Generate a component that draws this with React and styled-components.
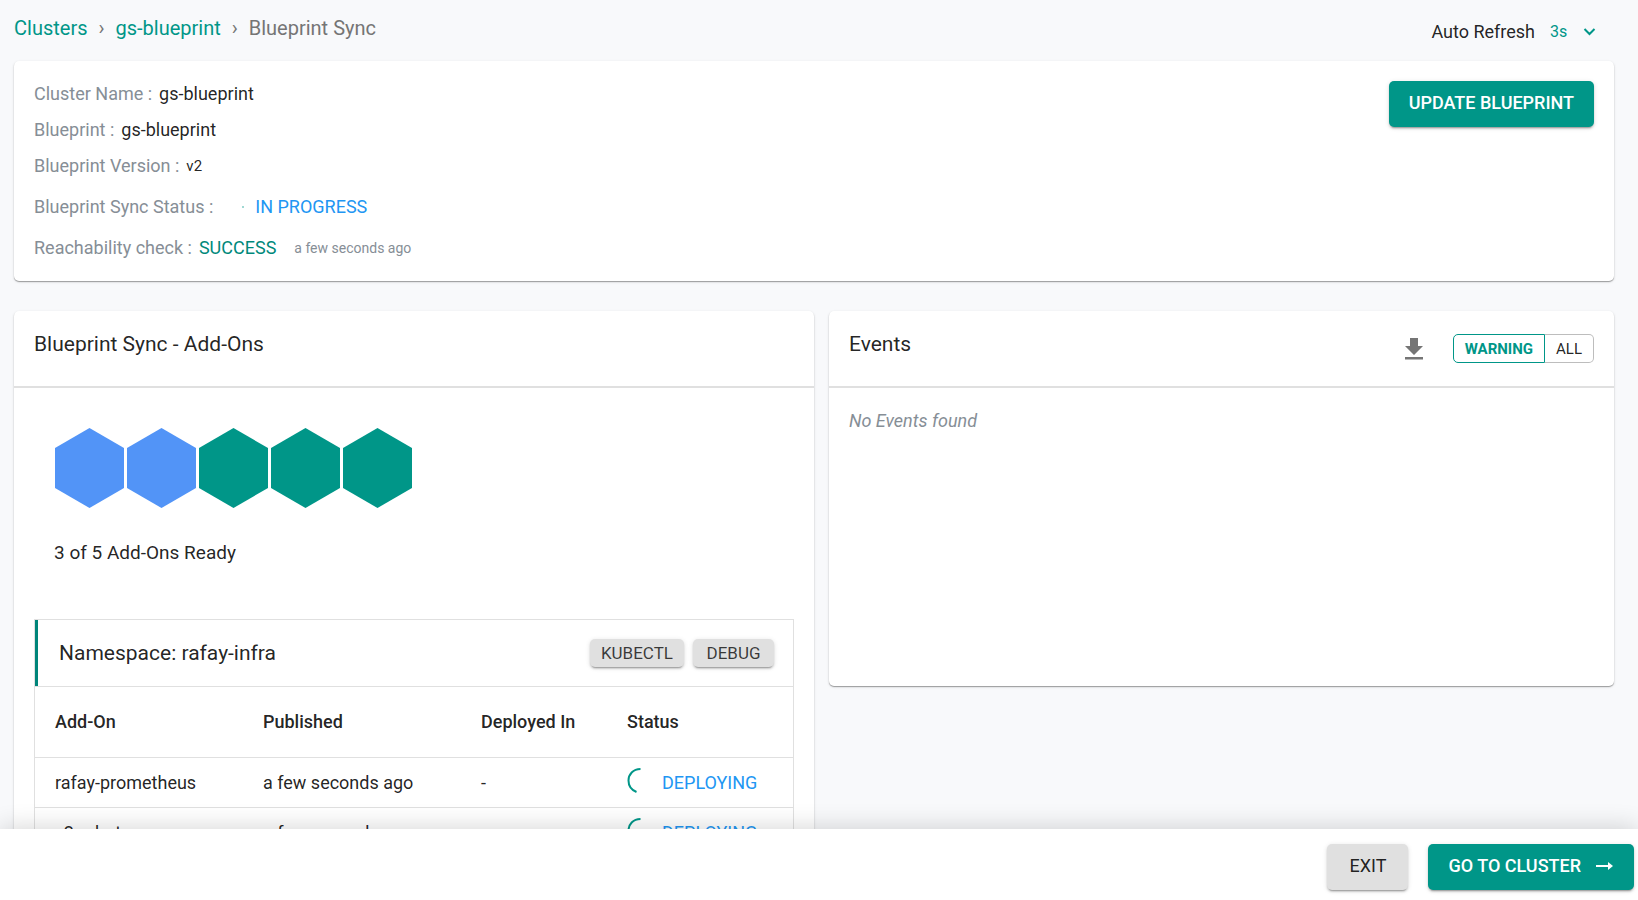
import React from "react";
import styled, { createGlobalStyle } from "styled-components";

const teal = "#009688";
const line = "#e0e0e0";
const cardShadow =
  "0 1px 3px rgba(0,0,0,0.12), 0 1px 1px rgba(0,0,0,0.14), 0 1px 1px rgba(0,0,0,0.2)";
const buttonShadow =
  "0 3px 1px -2px rgba(0,0,0,0.2), 0 2px 2px rgba(0,0,0,0.14), 0 1px 5px rgba(0,0,0,0.12)";

const GlobalStyle = createGlobalStyle`
  *, *::before, *::after { box-sizing: border-box; }
  html, body { margin: 0; height: 100%; overflow: hidden; }
  #root { height: 100%; }
  body {
    background: #f8f9fb;
    color: rgba(0, 0, 0, 0.87);
    font: 400 18px/24px Roboto, "Liberation Sans", sans-serif;
  }
  button { font: inherit; cursor: pointer; }
`;

const Screen = styled.div`
  height: 100vh;
  display: flex;
  flex-direction: column;
`;

const Content = styled.main`
  flex: 1;
  min-height: 0;
  overflow: hidden;
  padding: 0 24px 0 14px;
`;

const TopBar = styled.div`
  display: flex;
  justify-content: space-between;
  height: 61px;
`;

const Breadcrumb = styled.nav`
  display: flex;
  align-items: center;
  height: 56px;
  font-size: 20px;
  color: #757575;

  a {
    color: ${teal};
    text-decoration: none;
  }
`;

const Separator = styled.span`
  width: 28px;
  text-align: center;
`;

const Refresh = styled.div`
  display: flex;
  align-items: center;
  height: 64px;
  padding-right: 17px;
`;

const RefreshSelect = styled.span`
  display: flex;
  align-items: center;
  margin-left: 15px;
  color: ${teal};

  select {
    appearance: none;
    width: 32px;
    padding: 0;
    border: 0;
    background: transparent;
    color: inherit;
    font: inherit;
    font-size: 16px;
  }
`;

const Card = styled.section`
  background: #fff;
  border-radius: 5px;
  box-shadow: ${cardShadow};
`;

const Summary = styled(Card)`
  display: flex;
  justify-content: space-between;
  align-items: flex-start;
  height: 220px;
  padding: 15px 20px;

  > button { margin-top: 5px; }
`;

const Facts = styled.dl`
  margin: 0;
`;

const Fact = styled.div`
  display: flex;
  align-items: center;
  height: ${(p) => (p.$tall ? 41 : 36)}px;
  padding-top: ${(p) => (p.$tall ? 5 : 0)}px;

  dt { color: #868e96; margin-right: 7px; }
  dd { margin: 0; display: flex; align-items: center; }
`;

const State = styled.span`
  color: ${(p) => (p.$done ? "#00897b" : "#2196f3")};
`;

const Note = styled.span`
  margin-left: ${(p) => (p.$spaced ? 18 : 0)}px;
  color: ${(p) => (p.$muted ? "#868e96" : "inherit")};
  font-size: ${(p) => (p.$muted ? 14 : 15)}px;
`;

const Dot = styled.i`
  width: 2px;
  height: 2px;
  margin: 0 11px 0 22px;
  border-radius: 1px;
  background: #80cbc4;
`;

const Button = styled.button`
  display: inline-flex;
  align-items: center;
  justify-content: center;
  gap: 15px;
  height: 46px;
  min-width: 81px;
  padding: 0 20px 2px;
  border: 0;
  border-radius: 5px;
  background: ${(p) => (p.$primary ? teal : line)};
  color: ${(p) => (p.$primary ? "#fff" : "rgba(0,0,0,0.87)")};
  font-weight: ${(p) => (p.$primary ? 500 : 400)};
  white-space: nowrap;
  box-shadow: ${buttonShadow};
`;

const SmallButton = styled(Button)`
  height: 28px;
  padding: 0 11px 1px;
  font-size: 17px;
  color: rgba(0, 0, 0, 0.75);
`;

const Panels = styled.div`
  display: grid;
  grid-template-columns: 800fr 785fr;
  align-items: start;
  gap: 15px;
  margin-top: 30px;
`;

const PanelHeader = styled.header`
  display: flex;
  justify-content: space-between;
  height: 77px;
  padding: 0 20px;
  border-bottom: 2px solid ${line};
`;

const PanelTitle = styled.h2`
  margin: 20px 0 0;
  font-size: 21px;
  font-weight: 400;
  line-height: 26px;
`;

const Tools = styled.div`
  display: flex;
  align-items: center;
  gap: 26px;
`;

const IconButton = styled.button`
  display: flex;
  padding: 0;
  border: 0;
  background: none;
  color: #757575;
`;

const Toggle = styled.div`
  display: flex;
  height: 29px;
`;

const ToggleOption = styled.button`
  padding: 0 11px;
  border: 1px solid ${(p) => (p.$on ? teal : "#bdbdbd")};
  border-left-width: ${(p) => (p.$on ? 1 : 0)}px;
  border-radius: ${(p) => (p.$on ? "5px 0 0 5px" : "0 5px 5px 0")};
  background: #fff;
  color: ${(p) => (p.$on ? teal : "rgba(0,0,0,0.87)")};
  font-size: 15px;
  font-weight: ${(p) => (p.$on ? 700 : 400)};
`;

const Events = styled.div`
  height: 298px;
  padding: 21px 20px;
  color: #868e96;
  font-style: italic;
`;

const AddOns = styled.div`
  padding: 40px 20px 20px;
`;

const Hexes = styled.div`
  display: flex;
  gap: 2px;
  padding-left: 20px;
`;

const Ready = styled.p`
  margin: 33px 0 54px 20px;
  font-size: 19px;
`;

const Namespace = styled.div`
  border: 1px solid ${line};
`;

const NamespaceHeader = styled.div`
  display: flex;
  align-items: center;
  justify-content: space-between;
  height: 66px;
  padding: 0 19px 0 21px;
  border-left: 3px solid #00857a;

  h3 { margin: 0; font-size: 21px; font-weight: 400; }
  div { display: flex; gap: 9px; }
`;

const Table = styled.table`
  width: 100%;
  table-layout: fixed;
  border-collapse: collapse;

  th, td {
    height: 50px;
    padding: 0 0 0 20px;
    border-top: 1px solid ${line};
    text-align: left;
    white-space: nowrap;
  }
  th { height: 71px; font-weight: 500; }
`;

const Deploying = styled.span`
  display: flex;
  align-items: center;
  padding-top: 1px;

  svg { margin: -6px 10px 0 0; }
`;

const Footer = styled.footer`
  position: relative;
  display: flex;
  align-items: flex-start;
  justify-content: flex-end;
  gap: 20px;
  height: 71px;
  padding: 15px 4px 0 20px;
  background: #fff;
  box-shadow: 0 -2px 24px rgba(0, 0, 0, 0.16);
`;

const Hexagon = ({ color }) => (
  <svg width="70" height="80" viewBox="0 0 70 80" aria-hidden="true">
    <path d="M35.500 0 70 20V60L35.500 80 1 60V20Z" fill={color} />
  </svg>
);

const Spinner = () => (
  <svg width="25" height="26" viewBox="0 0 25 26" fill="none" aria-hidden="true">
    <path d="M13.500 2C6 2 1.500 7.500 1.500 13.500C1.500 18.500 4.500 23 9.500 25" stroke={teal} strokeWidth="2" />
  </svg>
);

const addOns = [
  { name: "rafay-prometheus", published: "a few seconds ago" },
  { name: "v2-robot", published: "a few seconds ago" },
];

const hexes = ["#5294f7", "#5294f7", teal, teal, teal];

export default function App() {
  return (
    <Screen>
      <GlobalStyle />
      <Content>
        <TopBar>
          <Breadcrumb aria-label="Breadcrumb">
            <a href="#clusters">Clusters</a>
            <Separator>›</Separator>
            <a href="#gs-blueprint">gs-blueprint</a>
            <Separator>›</Separator>
            <span>Blueprint Sync</span>
          </Breadcrumb>
          <Refresh>
            <label htmlFor="refresh">Auto Refresh</label>
            <RefreshSelect>
              <select id="refresh" defaultValue="3s">
                <option>3s</option>
              </select>
              <svg width="15" height="10" viewBox="0 0 15 10" fill="none" aria-hidden="true">
                <path d="M2.500 2 7.500 7l5-5" stroke="currentColor" strokeWidth="2" />
              </svg>
            </RefreshSelect>
          </Refresh>
        </TopBar>

        <Summary>
          <Facts>
            <Fact><dt>Cluster Name :</dt><dd>gs-blueprint</dd></Fact>
            <Fact><dt>Blueprint :</dt><dd>gs-blueprint</dd></Fact>
            <Fact><dt>Blueprint Version :</dt><dd><Note>v2</Note></dd></Fact>
            <Fact $tall>
              <dt>Blueprint Sync Status :</dt>
              <dd><Dot /><State>IN PROGRESS</State></dd>
            </Fact>
            <Fact $tall>
              <dt>Reachability check :</dt>
              <dd><State $done>SUCCESS</State><Note $muted $spaced>a few seconds ago</Note></dd>
            </Fact>
          </Facts>
          <Button $primary type="button">UPDATE BLUEPRINT</Button>
        </Summary>

        <Panels>
          <Card>
            <PanelHeader><PanelTitle>Blueprint Sync - Add-Ons</PanelTitle></PanelHeader>
            <AddOns>
              <Hexes>
                {hexes.map((color, i) => <Hexagon key={i} color={color} />)}
              </Hexes>
              <Ready>3 of 5 Add-Ons Ready</Ready>
              <Namespace>
                <NamespaceHeader>
                  <h3>Namespace: rafay-infra</h3>
                  <div>
                    <SmallButton type="button">KUBECTL</SmallButton>
                    <SmallButton type="button">DEBUG</SmallButton>
                  </div>
                </NamespaceHeader>
                <Table>
                  <colgroup>
                    <col width="208" /><col width="218" /><col width="146" /><col />
                  </colgroup>
                  <thead>
                    <tr><th>Add-On</th><th>Published</th><th>Deployed In</th><th>Status</th></tr>
                  </thead>
                  <tbody>
                    {addOns.map((a) => (
                      <tr key={a.name}>
                        <td>{a.name}</td>
                        <td>{a.published}</td>
                        <td>-</td>
                        <td><Deploying><Spinner /><State>DEPLOYING</State></Deploying></td>
                      </tr>
                    ))}
                  </tbody>
                </Table>
              </Namespace>
            </AddOns>
          </Card>

          <Card>
            <PanelHeader>
              <PanelTitle>Events</PanelTitle>
              <Tools>
                <IconButton type="button" aria-label="Download events">
                  <svg width="26" height="26" viewBox="0 0 26 26" fill="currentColor" aria-hidden="true">
                    <path d="M9 2h8v8h5l-9 9-9-9h5zM4 21h18v2.500H4z" />
                  </svg>
                </IconButton>
                <Toggle>
                  <ToggleOption $on type="button">WARNING</ToggleOption>
                  <ToggleOption type="button">ALL</ToggleOption>
                </Toggle>
              </Tools>
            </PanelHeader>
            <Events>No Events found</Events>
          </Card>
        </Panels>
      </Content>

      <Footer>
        <Button type="button">EXIT</Button>
        <Button $primary type="button">
          GO TO CLUSTER
          <svg width="18" height="10" viewBox="0 0 18 10" fill="currentColor" aria-hidden="true">
            <path d="M0 4h12V1l5 4-5 4V6H0z" />
          </svg>
        </Button>
      </Footer>
    </Screen>
  );
}
